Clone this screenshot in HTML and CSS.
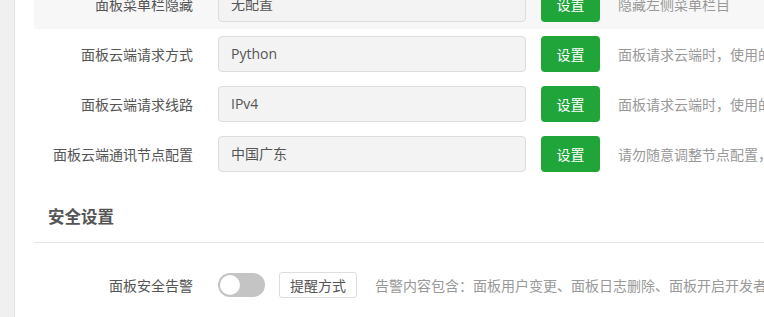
FILE: index.html
```html
<!DOCTYPE html>
<html lang="zh-CN">
<head>
<meta charset="utf-8">
<title>面板设置</title>
<link rel="stylesheet" href="styles.css">
</head>
<body>
<div class="shell">
  <div class="panel">
    <div class="list">
      <div class="row row-hover">
        <div class="label">面板菜单栏隐藏</div>
        <div class="input">无配置</div>
        <button class="btn-green">设置</button>
        <div class="desc">隐藏左侧菜单栏目</div>
      </div>
      <div class="row">
        <div class="label">面板云端请求方式</div>
        <div class="input">Python</div>
        <button class="btn-green">设置</button>
        <div class="desc">面板请求云端时，使用的请求方式，默认：Python</div>
      </div>
      <div class="row">
        <div class="label">面板云端请求线路</div>
        <div class="input">IPv4</div>
        <button class="btn-green">设置</button>
        <div class="desc">面板请求云端时，使用的请求线路，默认：IPv4</div>
      </div>
      <div class="row">
        <div class="label">面板云端通讯节点配置</div>
        <div class="input">中国广东</div>
        <button class="btn-green">设置</button>
        <div class="desc">请勿随意调整节点配置，如无法连接云端请恢复默认</div>
      </div>
    </div>
    <div class="section-title"><span>安全设置</span></div>
    <div class="row alert-row">
      <div class="label">面板安全告警</div>
      <div class="toggle"><span class="knob"></span></div>
      <button class="btn-plain">提醒方式</button>
      <div class="desc">告警内容包含：面板用户变更、面板日志删除、面板开启开发者模式</div>
    </div>
  </div>
</div>
</body>
</html>
```
FILE: styles.css
```css
html, body {
  margin: 0;
  padding: 0;
  height: 100%;
  overflow: hidden;
}
body {
  background: #f0f0f0;
  font-family: "Open Sans", "Noto Sans CJK SC", sans-serif;
  color: #555;
}
.shell {
  padding-left: 14px;
  height: 100%;
}
.panel {
  background: #fff;
  border-left: 1px solid #e4e4e4;
  padding-left: 19px;
  height: 100%;
  overflow: hidden;
}
.list {
  margin-top: -21px;
}
.row {
  display: flex;
  align-items: center;
  height: 50px;
  white-space: nowrap;
}
.row-hover {
  background: #f7f7f7;
}
.label {
  width: 159px;
  flex: none;
  text-align: right;
  font-size: 14px;
  color: #555;
}
.input {
  flex: none;
  box-sizing: border-box;
  width: 308px;
  height: 36px;
  margin-left: 25px;
  padding: 0 12px;
  line-height: 34px;
  background: #f3f3f3;
  border: 1px solid #dddddd;
  border-radius: 4px;
  font-size: 14px;
  color: #555;
}
.btn-green {
  flex: none;
  width: 59px;
  height: 36px;
  margin-left: 15px;
  border: 0;
  border-radius: 4px;
  background: #20a53a;
  color: #fff;
  font-family: inherit;
  font-size: 14px;
  padding: 0;
}
.desc {
  margin-left: 18px;
  font-size: 14px;
  color: #999;
}
.section-title {
  padding: 27px 0 14px 14px;
  line-height: 22px;
  border-bottom: 1px solid #e5e5e5;
  font-size: 16.5px;
  font-weight: bold;
  color: #555;
}
.alert-row {
  margin-top: 17px;
}
.toggle {
  flex: none;
  position: relative;
  width: 47px;
  height: 24px;
  margin-left: 25px;
  border-radius: 12px;
  background: #c4c4c4;
}
.knob {
  position: absolute;
  left: 2px;
  top: 2px;
  width: 20px;
  height: 20px;
  border-radius: 50%;
  background: #fff;
}
.btn-plain {
  flex: none;
  box-sizing: border-box;
  width: 78px;
  height: 26px;
  margin-left: 14px;
  padding: 0;
  border: 1px solid #dddddd;
  border-radius: 3px;
  background: #fff;
  color: #555;
  font-family: inherit;
  font-size: 14px;
}
```
